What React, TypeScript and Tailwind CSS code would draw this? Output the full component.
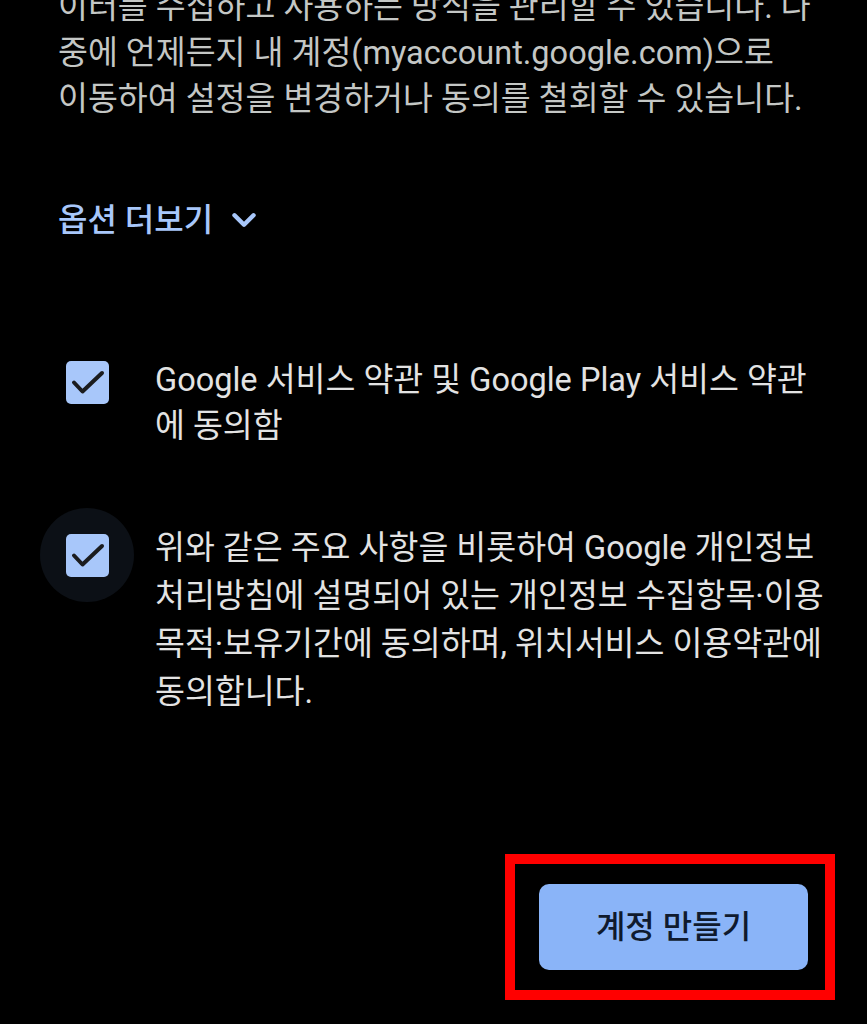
import { ChevronDown } from 'lucide-react'

const font = { fontFamily: "Roboto, 'Noto Sans CJK KR', sans-serif" }

function Check({ ring }: { ring?: boolean }) {
  return (
    <div
      className={
        'w-[94px] h-[94px] shrink-0 rounded-full flex items-center justify-center ' +
        (ring ? 'bg-[#0c1016]' : '')
      }
    >
      <div className="w-[43px] h-[43px] rounded-[5px] bg-[#a8c7fa]">
        <svg viewBox="0 0 43 43" className="w-[43px] h-[43px]">
          <path
            d="M8 21.5l8.5 9L36 12"
            fill="none"
            stroke="#1b1c1e"
            strokeWidth="4"
            strokeLinecap="round"
            strokeLinejoin="round"
          />
        </svg>
      </div>
    </div>
  )
}

export default function App() {
  return (
    <div
      className="w-[867px] h-[1024px] bg-black overflow-hidden flex flex-col"
      style={font}
    >
      <p className="-mt-[16px] pl-[58px] text-[32.5px] leading-[46px] text-[#c4c7c5] whitespace-nowrap">
        <span className="block">이터를 수집하고 사용하는 방식을 관리할 수 있습니다. 나</span>
        <span className="block">중에 언제든지 내 계정(myaccount.google.com)으로</span>
        <span className="block">이동하여 설정을 변경하거나 동의를 철회할 수 있습니다.</span>
      </p>

      <div className="mt-[75px] pl-[58px] flex items-center gap-[12px] h-[46px] text-[32px] font-medium text-[#a8c7fa]">
        <span>옵션 더보기</span>
        <ChevronDown className="w-[38px] h-[38px]" strokeWidth={2.8} />
      </div>

      <div className="mt-[114px] pl-[40px] flex items-start gap-[21px]">
        <div className="-mt-[22px]">
          <Check />
        </div>
        <p className="text-[32.5px] leading-[46px] text-[#e3e3e3] whitespace-nowrap">
          <span className="block">Google 서비스 약관 및 Google Play 서비스 약관</span>
          <span className="block">에 동의함</span>
        </p>
      </div>

      <div className="mt-[75px] pl-[40px] flex items-start gap-[21px]">
        <div className="-mt-[16px]">
          <Check ring />
        </div>
        <p className="text-[32.5px] leading-[48px] text-[#e3e3e3] whitespace-nowrap">
          <span className="block">위와 같은 주요 사항을 비롯하여 Google 개인정보</span>
          <span className="block">처리방침에 설명되어 있는 개인정보 수집항목·이용</span>
          <span className="block">목적·보유기간에 동의하며, 위치서비스 이용약관에</span>
          <span className="block">동의합니다.</span>
        </p>
      </div>

      <div className="mt-[138px] flex justify-end pr-[32px]">
        <div className="w-[330px] h-[146px] border-[10px] border-[#ff0000] pl-[24px] pt-[20px]">
          <button className="w-[269px] h-[86px] rounded-[10px] bg-[#8ab4f8] text-[32px] font-medium text-[#0f1a2e]">
            계정 만들기
          </button>
        </div>
      </div>
    </div>
  )
}
